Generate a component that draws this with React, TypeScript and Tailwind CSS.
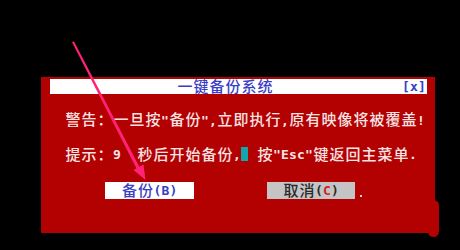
import React from "react";

function T({ s }: { s: string }) {
  return (
    <>
      {Array.from(s).map((c, i) => {
        const wide = c.charCodeAt(0) > 255;
        return (
          <span
            key={i}
            className={
              wide
                ? "inline-block w-4 text-center text-[15px] font-medium"
                : "inline-block w-2 text-center text-[13px] font-bold"
            }
          >
            {c === " " ? "\u00a0" : c}
          </span>
        );
      })}
    </>
  );
}

export default function App() {
  return (
    <div
      className="relative w-[460px] h-[250px] bg-black overflow-hidden"
      style={{ fontFamily: "'DejaVu Sans Mono', 'Noto Sans CJK SC', monospace" }}
    >
      <div className="absolute left-[428px] top-[200px] w-[11px] h-[37px] rounded-[6px] bg-[#b30000]" />
      <div className="ml-[41px] mt-[77px] w-[394px] h-[156px] bg-[#b30000] flex flex-col pt-[2px] relative">
        {/* title bar */}
        <div className="ml-[9px] w-[377px] h-[15px] bg-white flex items-center leading-4 text-[#3a3ec4] font-bold whitespace-nowrap">
          <div className="pl-[127px] flex-1">
            <T s="一键备份系统" />
          </div>
          <div className="pr-[1px]">
            <T s="[x]" />
          </div>
        </div>
        {/* line 1 */}
        <div className="mt-[18px] ml-[24px] h-4 leading-4 text-[#f8e4e4] whitespace-nowrap">
          <T s={'警告：一旦按"备份",立即执行,原有映像将被覆盖!'} />
        </div>
        {/* line 2 */}
        <div className="mt-[19px] ml-[24px] h-4 leading-4 text-[#f8e4e4] whitespace-nowrap flex items-center">
          <T s="提示：9  秒后开始备份," />
          <span className="inline-block w-2 h-4 flex items-center">
            <span className="block w-[7px] h-[14px] bg-[#12a6ac]" />
          </span>
          <T s={' 按"Esc"键返回主菜单.'} />
        </div>
        {/* buttons */}
        <div className="mt-[19px] flex items-start">
          <div className="ml-[64px] w-[89px] h-[17px] bg-white flex items-center justify-center leading-4 text-[#3a3ec4] whitespace-nowrap">
            <T s="备份(B)" />
          </div>
          <div className="ml-[73px] w-[88px] h-[17px] bg-[#c4c4c4] flex items-center justify-center leading-4 text-[#2a2a2a] whitespace-nowrap">
            <T s="取消(" />
            <span className="inline-block w-2 text-center text-[13px] font-bold text-[#d42020]">C</span>
            <T s=")" />
          </div>
          <div className="ml-[5px] mt-[13px] w-[2px] h-[2px] bg-[#f0d0d0]" />
        </div>
      </div>
      {/* arrow overlay */}
      <svg className="absolute left-0 top-0" width="460" height="250" viewBox="0 0 460 250">
        <polygon points="72,42 74,41.5 140,168 137,169.5" fill="#ff2277" />
        <polygon points="145.5,180 143.5,164.5 133.5,170" fill="#ff2277" />
      </svg>
    </div>
  );
}
